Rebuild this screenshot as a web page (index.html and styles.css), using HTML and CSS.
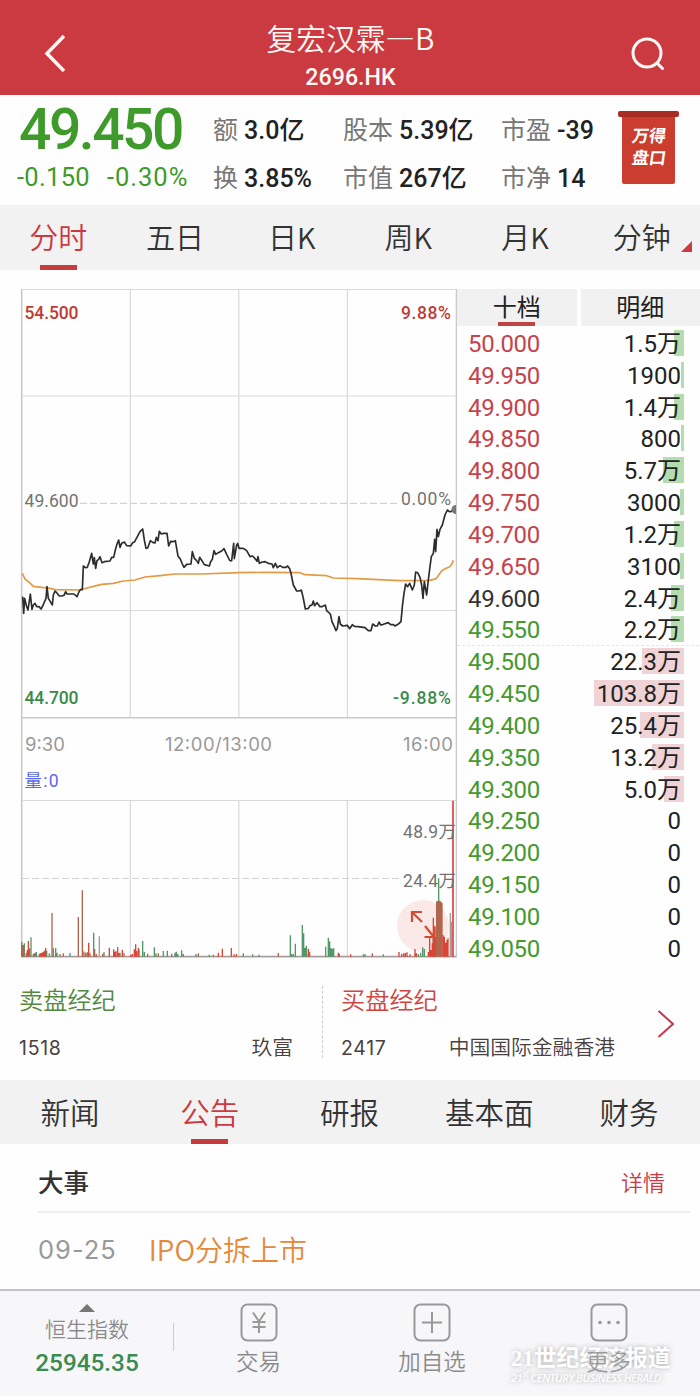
FILE: index.html
```
<!DOCTYPE html>
<html lang="zh-CN">
<head>
    <meta charset="UTF-8">
    <meta name="viewport" content="width=device-width, initial-scale=1.0">
    <title>复宏汉霖—B 2696.HK</title>
    <link rel="stylesheet" href="styles.css">
</head>
<body>
    <header class="header">
        <svg class="back" width="24" height="40" viewBox="0 0 24 40"><path d="M21 2 L4 19.5 L21 37"/></svg>
        <div class="title">
            <h1>复宏汉霖—B</h1>
            <p>2696.HK</p>
        </div>
        <svg class="search" width="36" height="36" viewBox="0 0 36 36"><circle cx="16" cy="17" r="14"/><path d="M26 27 L31.5 32.5"/></svg>
    </header>

    <section class="quote">
        <div class="last">
            <div class="price">49.450</div>
            <div class="change"><span>-0.150</span><span>-0.30%</span></div>
        </div>
        <div class="stats">
            <div><span>额</span> <b>3.0亿</b></div>
            <div><span>股本</span> <b>5.39亿</b></div>
            <div><span>市盈</span> <b>-39</b></div>
            <div><span>换</span> <b>3.85%</b></div>
            <div><span>市值</span> <b>267亿</b></div>
            <div><span>市净</span> <b>14</b></div>
        </div>
        <div class="badge"><span>万得</span><span>盘口</span></div>
    </section>

    <nav class="tabs periods">
        <a class="active">分时</a>
        <a>五日</a>
        <a>日K</a>
        <a>周K</a>
        <a>月K</a>
        <a class="more">分钟</a>
    </nav>

    <main class="market">
        <svg class="chart" width="457" height="685" viewBox="0 280 457 685">
            <!-- grid -->
            <g class="grid">
                <path d="M21.5 289.5 H456 M21.5 396 H456 M21.5 610.5 H456 M21.5 800.5 H456"/>
                <path d="M130.3 289 V717 M238.8 289 V717 M347.4 289 V717 M130.3 800 V957 M238.8 800 V957 M347.4 800 V957"/>
                <path class="frame" d="M21.7 289 V957 M456.5 289 V957 M21 717.7 H457 M21 957 H457"/>
                <path class="dash" d="M80 503.3 H400 M22 878.5 H402"/>
            </g>

            <!-- expand button background -->
            <circle class="expand-bg" cx="423" cy="926" r="26"/>

            <!-- volume, three units per pixel -->
            <g class="volume" transform="translate(0 730) scale(.33333)">
                <path class="grey" d="M66 679 H1368 M298 680 V619 M1351 680 V549 M1354 680 V575"/>
                <path class="green" d="M65 680 V635 M69 680 V645 M73 680 V640 M93 680 V622 M100 680 V672 M106 680 V668 M109 680 V666 M118 680 V672 M140 680 V662 M148 680 V670 M160 680 V655 M167 680 V654 M171 680 V668 M210 680 V669 M248 680 V660 M281 680 V608 M312 680 V666 M360 680 V668 M428 680 V633 M433 680 V666 M463 680 V652 M468 680 V670 M490 680 V663 M502 680 V662 M525 680 V668 M529 680 V665 M533 680 V672 M545 680 V661 M550 680 V672 M588 680 V672 M628 680 V674 M730 680 V670 M758 680 V673 M777 680 V674 M871 680 V616 M875 680 V672 M880 680 V672 M886 680 V641 M907 680 V585 M911 680 V610 M915 680 V654 M919 680 V647 M925 680 V672 M977 680 V650 M985 680 V623 M989 680 V634 M993 680 V654 M997 680 V657 M1001 680 V654 M1090 680 V673 M1095 680 V672 M1150 680 V673 M1255 680 V672 M1262 680 V668 M1268 680 V652 M1273 680 V657 M1316 680 V445"/>
                <path class="brown" d="M67 680 V645 M71 680 V652 M79 680 V668 M82 680 V660 M89 680 V655 M103 680 V670 M156 680 V549 M180 680 V672 M190 680 V670 M235 680 V561 M247 680 V481 M252 680 V665 M257 680 V668 M262 680 V667 M270 680 V670 M284 680 V657 M289 680 V672 M308 680 V671 M345 680 V666 M372 680 V669 M415 680 V653 M443 680 V671 M475 680 V670 M515 680 V671 M595 680 V670 M640 680 V674 M835 680 V669 M929 680 V665 M1015 680 V668 M1117 680 V670 M1300 680 V610 M1310 680 V514 M1314 680 V512 M1318 680 V512 M1322 680 V514 M1326 680 V518"/>
                <path class="red" d="M85 680 V633 M121 680 V670 M125 680 V669 M129 680 V666 M133 680 V662 M137 680 V654 M266 680 V638 M328 680 V653 M341 680 V658 M344 680 V665 M348 680 V664 M353 680 V651 M357 680 V669 M367 680 V659 M392 680 V674 M397 680 V672 M403 680 V658 M407 680 V643 M411 680 V663 M417 680 V658 M655 680 V668 M667 680 V656 M694 680 V654 M702 680 V673 M709 680 V672 M925 680 V656 M1018 680 V671 M1052 680 V673 M1197 680 V666 M1205 680 V671 M1211 680 V670 M1216 680 V669 M1221 680 V667 M1230 680 V673 M1245 680 V657 M1249 680 V670 M1285 680 V666 M1289 680 V622 M1293 680 V660 M1297 680 V640 M1300 680 V563 M1304 680 V588 M1306 680 V620 M1329 680 V615 M1333 680 V620 M1337 680 V638 M1341 680 V630 M1344 680 V625"/>
                <path class="spike" d="M1359 680 V212"/>
            </g>

            <!-- average and price lines, three units per pixel -->
            <g class="lines" transform="translate(0 490) scale(.33333)">
                <path class="average" d="M67 250 L75 267 L88 277 L100 289 L125 292 L150 295 L165 299 L235 300 L250 297 L280 289 L305 283 L340 280 L370 273 L405 270 L435 261 L480 257 L525 252 L600 252 L720 248"/>
                <path class="price-line" d="M68 320 L71 370 L74 325 L80 350 L84 360 L91 312 L96 358 L100 345 L105 340 L110 350 L117 350 L123 357 L128 348 L138 325 L141 290 L145 325 L151 335 L157 345 L160 315 L165 303 L170 308 L178 318 L186 318 L192 316 L197 305 L201 312 L222 312 L231 320 L238 303 L242 299 L247 299 L250 228 L256 233 L262 232 L268 215 L275 190 L280 222 L283 203 L287 235 L291 212 L296 208 L300 200 L306 218 L313 215 L330 213 L335 202 L341 202 L346 180 L351 162 L356 150 L360 172 L365 160 L373 156 L380 167 L392 168 L398 158 L404 155 L412 140 L420 125 L428 117 L433 150 L438 175 L443 174 L451 152 L458 157 L465 159 L469 142 L474 152 L478 124 L484 132 L491 130 L501 130 L506 168 L512 154 L520 155 L526 152 L530 175 L534 198 L541 207 L547 222 L552 232 L560 223 L573 222 L577 185 L583 205 L590 212 L595 220 L599 202 L607 214 L613 224 L628 228 L632 215 L637 208 L642 182 L647 193 L655 188 L665 183 L672 176 L680 193 L690 213"/>
                <g transform="translate(690 0)">
                    <path class="average" d="M30 248 L100 247 L210 248 L225 254 L290 257 L310 264 L380 266 L510 272 L600 271 L618 266 L635 243 L645 236 L658 231 L665 224 L670 211"/>
                    <path class="price-line" d="M0 213 L5 212 L11 160 L13 206 L20 165 L23 160 L27 175 L40 175 L50 182 L60 200 L68 198 L77 208 L81 214 L84 200 L88 220 L97 216 L105 215 L115 220 L126 222 L130 233 L136 220 L142 233 L150 227 L158 232 L168 232 L173 228 L179 236 L183 250 L190 285 L200 303 L208 303 L214 300 L220 325 L226 357 L235 355 L240 347 L246 345 L250 333 L254 347 L261 338 L270 350 L276 350 L286 345 L290 362 L301 372 L306 395 L313 410 L318 422 L322 415 L327 380 L331 402 L338 408 L352 406 L359 416 L367 404 L373 409 L385 410 L405 413 L415 422 L423 422 L428 402 L436 408 L442 408 L447 396 L452 405 L460 403 L475 398 L482 404 L490 404 L495 408 L505 402 L513 395 L517 350 L522 310 L527 282 L533 290 L539 280 L547 300 L553 285 L557 246 L563 248 L570 262 L575 285 L579 325 L583 275 L590 315 L595 270 L600 230 L604 200 L610 190 L614 148 L617 185 L621 118 L625 140 L630 118 L637 105 L645 75 L652 60 L658 65 L665 64 L670 56"/>
                </g>
            </g>
            <path class="now" d="M456 505 A4.5 4.5 0 0 0 456 514 Z"/>

            <!-- axis labels -->
            <g class="labels">
                <text class="up" x="24.5" y="319" textLength="54">54.500</text>
                <text class="up" x="401" y="319" textLength="50">9.88%</text>
                <text x="24.5" y="506.5" textLength="54">49.600</text>
                <text x="401" y="504.5" textLength="50">0.00%</text>
                <text class="down" x="24.5" y="703.5" textLength="54">44.700</text>
                <text class="down" x="393" y="703.5" textLength="58">-9.88%</text>
                <text class="time" x="25" y="751" textLength="40">9:30</text>
                <text class="time" x="165" y="751" textLength="107">12:00/13:00</text>
                <text class="time" x="403" y="751" textLength="50">16:00</text>
                <text class="vol" x="24.5" y="787" textLength="34">量:0</text>
                <text x="403" y="838" textLength="53">48.9万</text>
                <text x="403" y="886.5" textLength="53">24.4万</text>
            </g>

            <path class="expand" d="M422 922 L412.5 912.5 M412 922 V912 H422 M425 926 L433.5 936.5 M424.5 937 H434.5 V927"/>
        </svg>

        <section class="book">
            <div class="book-tabs">
                <a class="active">十档</a>
                <a>明细</a>
            </div>
            <ul class="levels">
                <li class="sell"><span>50.000</span><b>1.5万</b><i style="width: 10px"></i></li>
                <li class="sell"><span>49.950</span><b>1900</b><i style="width: 3px"></i></li>
                <li class="sell"><span>49.900</span><b>1.4万</b><i style="width: 10px"></i></li>
                <li class="sell"><span>49.850</span><b>800</b><i style="width: 3px"></i></li>
                <li class="sell"><span>49.800</span><b>5.7万</b><i style="width: 21px"></i></li>
                <li class="sell"><span>49.750</span><b>3000</b><i style="width: 4px"></i></li>
                <li class="sell"><span>49.700</span><b>1.2万</b><i style="width: 10px"></i></li>
                <li class="sell"><span>49.650</span><b>3100</b><i style="width: 4px"></i></li>
                <li class="sell flat"><span>49.600</span><b>2.4万</b><i style="width: 13px"></i></li>
                <li class="sell low"><span>49.550</span><b>2.2万</b><i style="width: 13px"></i></li>
                <li class="buy first"><span>49.500</span><b>22.3万</b><i style="width: 42px"></i></li>
                <li class="buy"><span>49.450</span><b>103.8万</b><i style="width: 90px"></i></li>
                <li class="buy"><span>49.400</span><b>25.4万</b><i style="width: 44px"></i></li>
                <li class="buy"><span>49.350</span><b>13.2万</b><i style="width: 32px"></i></li>
                <li class="buy"><span>49.300</span><b>5.0万</b><i style="width: 20px"></i></li>
                <li class="buy"><span>49.250</span><b>0</b></li>
                <li class="buy"><span>49.200</span><b>0</b></li>
                <li class="buy"><span>49.150</span><b>0</b></li>
                <li class="buy"><span>49.100</span><b>0</b></li>
                <li class="buy"><span>49.050</span><b>0</b></li>
            </ul>
        </section>
    </main>

    <section class="brokers">
        <div class="broker">
            <h2 class="ask">卖盘经纪</h2>
            <p><span>1518</span><span>玖富</span></p>
        </div>
        <div class="broker">
            <h2 class="bid">买盘经纪</h2>
            <p><span>2417</span><span>中国国际金融香港</span></p>
        </div>
        <svg class="next" width="18" height="30" viewBox="0 0 18 30"><path d="M1.5 2 L16 15 L1.5 28"/></svg>
    </section>

    <nav class="tabs info">
        <a>新闻</a>
        <a class="active">公告</a>
        <a>研报</a>
        <a>基本面</a>
        <a>财务</a>
    </nav>

    <section class="events">
        <div class="events-head"><h2>大事</h2><a>详情</a></div>
        <div class="event"><time>09-25</time><span>IPO分拆上市</span></div>
    </section>

    <footer class="footer">
        <div class="index">
            <i class="triangle"></i>
            <span>恒生指数</span>
            <b>25945.35</b>
        </div>
        <div class="action">
            <svg width="38" height="39" viewBox="0 0 38 39"><rect x="1.5" y="1.5" width="35" height="36" rx="6"/><path d="M13 9.5 L19 18.5 L25 9.5 M19 18.5 V30 M12.5 19 H25.5 M12.5 24 H25.5"/></svg>
            <span>交易</span>
        </div>
        <div class="action">
            <svg width="38" height="39" viewBox="0 0 38 39"><rect x="1.5" y="1.5" width="35" height="36" rx="6"/><path d="M19 9 V30 M9 19.5 H29"/></svg>
            <span>加自选</span>
        </div>
        <div class="action">
            <svg width="38" height="39" viewBox="0 0 38 39"><rect x="1.5" y="1.5" width="35" height="36" rx="6"/><g class="dots"><circle cx="10" cy="19.5" r="1.8"/><circle cx="19" cy="19.5" r="1.8"/><circle cx="28" cy="19.5" r="1.8"/></g></svg>
            <span class="over">更多</span>
        </div>
        <div class="watermark">
            <strong>21世纪经济报道</strong>
            <em>21<sup>st</sup> CENTURY BUSINESS HERALD</em>
        </div>
    </footer>
</body>
</html>
```
FILE: styles.css
```
* {
    box-sizing: border-box;
    margin: 0;
    padding: 0;
}

body {
    width: 700px;
    height: 1396px;
    background-color: #fefefe;
    color: #333;
    font-family: Roboto, "Noto Sans CJK SC", sans-serif;
    overflow: hidden;
}

h1, h2 {
    font-weight: normal;
}

svg {
    display: block;
    fill: none;
}

/* header */
.header {
    display: flex;
    justify-content: space-between;
    height: 95px;
    padding: 0 33px 0 43px;
    background-color: #cb3a40;
    color: #fff8f3;
}

.back {
    margin-top: 34px;
    stroke: #fff8f3;
    stroke-width: 3.5;
}

.search {
    margin-top: 36px;
    stroke: #fff8f3;
    stroke-width: 3;
    stroke-linecap: round;
}

.title {
    padding: 18px 0 0 3px;
    text-align: center;
}

.title h1 {
    font-family: "Noto Sans CJK SC", sans-serif;
    font-size: 29.7px;
    font-weight: 350;
    line-height: 40px;
}

.title p {
    font-size: 23.2px;
    font-weight: 500;
    line-height: 38px;
}

/* quote */
.quote {
    display: flex;
    height: 110px;
    padding-left: 17px;
}

.last {
    width: 196px;
    color: #3f9a2c;
}

.price {
    padding-left: 2px;
    font-size: 57px;
    font-weight: 500;
    letter-spacing: -2.5px;
    line-height: 70px;
}

.change {
    display: flex;
    gap: 17px;
    font-size: 25.5px;
    letter-spacing: .3px;
    line-height: 24px;
}

.change span:last-child {
    letter-spacing: 1px;
}

.stats {
    display: grid;
    grid-template-columns: 130px 158px 110px;
    grid-template-rows: 48px 48px;
    width: 398px;
    padding-top: 12px;
    line-height: 48px;
    white-space: nowrap;
}

.stats div {
    display: flex;
    gap: 6px;
}

.stats span {
    color: #777;
    font-size: 25px;
}

.stats b {
    color: #222;
    font-size: 25px;
    font-weight: 500;
}

.badge {
    display: flex;
    flex-direction: column;
    align-items: center;
    position: relative;
    width: 53px;
    height: 73px;
    margin: 16px 0 0 11px;
    padding-top: 14px;
    border-radius: 2px;
    background-color: #cb3d2e;
    color: #fff;
    font-size: 17px;
    font-weight: 700;
    line-height: 22px;
}

.badge::before {
    content: "";
    position: absolute;
    top: 0;
    left: -4px;
    width: 61px;
    height: 6px;
    border-radius: 2px;
    background-color: #a92c24;
}

.badge span {
    transform: skewX(-8deg);
}

/* tabs */
.tabs {
    display: flex;
    background-color: #f2f2f2;
    font-family: "Noto Sans CJK SC", sans-serif;
    font-size: 29px;
    font-weight: 350;
}

.tabs a {
    display: flex;
    flex: 1;
    justify-content: center;
    position: relative;
}

.tabs .active {
    color: #cb3a40;
}

.tabs .active::after {
    content: "";
    position: absolute;
    bottom: 0;
    width: 37px;
    height: 5px;
    background-color: #c63c3c;
}

.periods {
    height: 65px;
    line-height: 63px;
}

.periods .more::after {
    content: "";
    position: absolute;
    right: 8px;
    bottom: 18px;
    border-left: 11px solid transparent;
    border-bottom: 11px solid #cb3a40;
}

.info {
    height: 64px;
    padding-right: 1px;
    font-size: 29.5px;
    line-height: 62px;
}

/* chart */
.market {
    display: flex;
    height: 695px;
    padding-top: 10px;
}

.grid {
    stroke: #d9d9d9;
    stroke-width: 1.2;
}

.frame {
    stroke: #c9c9c9;
    stroke-width: 1.6;
}

.dash {
    stroke: #d2d2d2;
    stroke-dasharray: 7 3;
}

.volume {
    stroke-width: 4;
}

.volume .grey {
    stroke: #a59b9b;
}

.volume .green {
    stroke: #529768;
}

.volume .brown {
    stroke: #b0654f;
}

.volume .red {
    stroke: #dc4434;
}

.volume .spike {
    stroke: #dd3f3f;
    stroke-width: 5;
}

.lines {
    stroke-width: 5;
    stroke-linejoin: round;
}

.average {
    stroke: #e39a45;
}

.price-line {
    stroke: #2d2d2d;
}

.now {
    fill: #777;
}

.labels {
    fill: #737373;
    font-size: 17.5px;
}

.labels .up {
    fill: #c23a30;
    font-weight: 500;
}

.labels .down {
    fill: #3b8a4b;
    font-weight: 500;
}

.labels .time {
    fill: #999;
    font-family: Inter, sans-serif;
    font-size: 18.5px;
}

.labels .vol {
    fill: #5b67ea;
}

.expand-bg {
    fill: #e0503c;
    fill-opacity: .12;
}

.expand {
    stroke: #d94a32;
    stroke-width: 2.2;
}

/* order book */
.book {
    width: 243px;
    padding-top: 9px;
}

.book-tabs {
    display: flex;
    gap: 4px;
    height: 37px;
    font-size: 24px;
    line-height: 38px;
    text-align: center;
    color: #222;
}

.book-tabs a {
    display: flex;
    justify-content: center;
    flex: 1;
    position: relative;
    background-color: #f1f1f1;
}

.book-tabs .active::after {
    content: "";
    position: absolute;
    bottom: 0;
    width: 37px;
    height: 4px;
    background-color: #bd4644;
}

.levels {
    padding: 1px 16px 0 11px;
    list-style: none;
    font-size: 24px;
    line-height: 35px;
}

.levels li {
    display: flex;
    justify-content: space-between;
    height: 31.84px;
    padding-right: 3px;
    position: relative;
}

.levels span {
    color: #c5434c;
    letter-spacing: -.3px;
}

.levels .flat span {
    color: #333;
}

.levels .buy span,
.levels .low span {
    color: #45992f;
}

.levels b {
    color: #222;
    font-weight: 400;
    z-index: 1;
}

/* volume shade behind each amount */
.levels i {
    position: absolute;
    top: 3px;
    right: 0;
    height: 26px;
    background-color: #b4dcae;
}

.levels .buy i {
    background-color: #f0d3d6;
}

.levels .first::before {
    content: "";
    position: absolute;
    top: 0;
    left: -11px;
    width: 242px;
    border-top: 1px dashed #e6e6e6;
}

/* brokers */
.brokers {
    display: flex;
    height: 115px;
    padding: 21px 0 0 19px;
}

.broker {
    width: 304px;
    height: 72px;
    padding-right: 29px;
    border-right: 1px dashed #ccc;
}

.broker + .broker {
    width: 293px;
    padding: 0 1px 0 18px;
    border: none;
}

.broker h2 {
    font-size: 24.2px;
    font-weight: 350;
    line-height: 30px;
}

.broker .ask {
    color: #55893f;
}

.broker .bid {
    color: #d0453f;
}

.broker p {
    display: flex;
    justify-content: space-between;
    margin-top: 17px;
    color: #4a4040;
    font-size: 20.8px;
    font-weight: 350;
    line-height: 30px;
}

.broker p span:first-child {
    font-family: Inter, sans-serif;
    font-size: 19.5px;
    font-weight: 400;
    letter-spacing: .7px;
}

.next {
    margin: 23px 0 0 41px;
    stroke: #c5384a;
    stroke-width: 2;
}

/* events */
.events {
    height: 145px;
    padding: 0 10px 0 38px;
}

.events-head {
    display: flex;
    justify-content: space-between;
    height: 69px;
    padding-right: 25px;
    border-bottom: 2px solid #eee;
    line-height: 79px;
}

.events-head h2 {
    font-size: 25.5px;
    font-weight: 500;
}

.events-head a {
    color: #cb3a48;
    font-size: 22px;
    font-weight: 350;
}

.event {
    display: flex;
    gap: 32px;
    line-height: 74px;
}

.event time {
    color: #999;
    font-family: Inter, sans-serif;
    font-size: 25.5px;
    letter-spacing: 1px;
}

.event span {
    color: #e5883a;
    font-family: "Noto Sans CJK SC", sans-serif;
    font-size: 28px;
    font-weight: 350;
    line-height: 72px;
}

/* footer */
.footer {
    display: grid;
    grid-template-columns: 174px 169px 178px 175px;
    position: relative;
    height: 107px;
    border-top: 2px solid #c3c3c5;
    background-color: #f7f7fa;
    color: #8b8b8d;
}

.index {
    display: flex;
    flex-direction: column;
    align-items: center;
    height: 60px;
    padding-top: 13px;
}

.index::after {
    content: "";
    position: absolute;
    top: 32px;
    left: 173px;
    height: 28px;
    border-left: 1px solid #ccc;
}

.triangle {
    border: 8px solid transparent;
    border-top: none;
    border-bottom-color: #777;
}

.index span {
    font-size: 21px;
    font-weight: 350;
    line-height: 36px;
}

.index b {
    color: #3c8b50;
    font-size: 24.3px;
    font-weight: 500;
    line-height: 30px;
}

.action {
    display: flex;
    flex-direction: column;
    align-items: center;
    padding-top: 12px;
    font-size: 22.5px;
    font-weight: 350;
    line-height: 40px;
}

.action svg {
    stroke: #999;
    stroke-width: 2;
}

.action .dots {
    fill: #999;
    stroke: none;
}

.action .over {
    position: relative;
    z-index: 1;
    opacity: .8;
}

.watermark {
    position: absolute;
    top: 55px;
    left: 511px;
    display: flex;
    flex-direction: column;
    color: #fff;
    text-shadow: 0 0 5px #aaa;
    white-space: nowrap;
}

.watermark strong {
    font-family: "Liberation Serif", "Noto Sans CJK SC", serif;
    font-size: 22.8px;
    line-height: 26px;
}

.watermark em {
    font-family: "Open Sans", sans-serif;
    font-size: 11px;
    font-weight: 600;
    letter-spacing: -.4px;
    line-height: 12px;
}

.watermark sup {
    font-size: 8px;
    line-height: 0;
}
```
